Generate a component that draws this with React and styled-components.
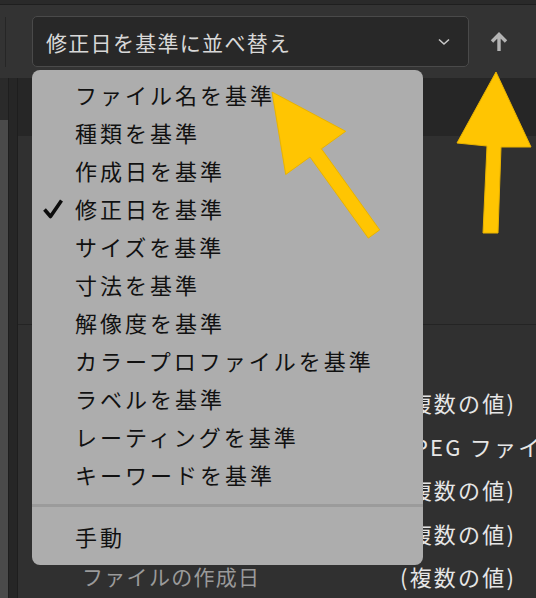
import React from 'react';
import styled, { createGlobalStyle } from 'styled-components';

const GlobalStyle = createGlobalStyle`
  html, body {
    margin: 0;
    padding: 0;
    background: #2f2f2f;
  }
  * {
    box-sizing: border-box;
  }
`;

const Window = styled.div`
  position: relative;
  width: 536px;
  height: 598px;
  overflow: hidden;
  background: #303030;
  font-family: 'Noto Sans CJK JP', 'Noto Sans', sans-serif;
`;

const TopStrip = styled.div`
  height: 5px;
  background: #2a2a2a;
  border-bottom: 1px solid #1f1f1f;
`;

const Toolbar = styled.div`
  height: 73px;
  display: flex;
  align-items: center;
  padding-left: 5px;
  background: #333333;
`;

const Divider = styled.div`
  width: 1px;
  height: 50px;
  background: #262626;
`;

const SelectWrap = styled.div`
  position: relative;
  margin-left: 26px;
  z-index: 5;
`;

const SelectBox = styled.div`
  width: 437px;
  height: 51px;
  display: flex;
  align-items: center;
  justify-content: space-between;
  padding: 0 18px 0 13px;
  background: #282828;
  border: 1.5px solid #4a4a4a;
  border-radius: 5px;
  color: #d8d8d8;
  font-size: 21px;
  letter-spacing: 1.3px;
`;

const SortButton = styled.div`
  margin-left: 20px;
  width: 20px;
  height: 22px;
  display: flex;
  align-items: center;
  justify-content: center;
`;

const Menu = styled.ul`
  position: absolute;
  top: 54px;
  left: 0;
  width: 391px;
  margin: 0;
  padding: 5px 0 10px;
  list-style: none;
  background: #adadad;
  border-radius: 8px;
`;

const MenuItem = styled.li`
  height: 38px;
  display: flex;
  align-items: center;
  padding-left: 43px;
  position: relative;
  color: #111111;
  font-size: 22px;
  letter-spacing: 3px;
  white-space: nowrap;
`;

const Check = styled.svg`
  position: absolute;
  left: 10px;
  top: 9px;
`;

const Separator = styled.li`
  height: 3px;
  margin: 11px 0 10px;
  background: #9b9b9b;
`;

const Body = styled.div`
  display: flex;
  height: 520px;
`;

const EdgeRail = styled.div`
  width: 8px;
  display: flex;
  flex-direction: column;
  background: #4a4a4a;
  &::before {
    content: '';
    height: 42px;
    background: #2a2a2a;
  }
`;

const Gutter = styled.div`
  width: 10px;
  background: #262626;
  border-left: 1px solid #1e1e1e;
  border-right: 1px solid #1e1e1e;
`;

const Panel = styled.div`
  flex: 1;
  display: flex;
  flex-direction: column;
  min-width: 0;
`;

const PanelHeader = styled.div`
  height: 59px;
  background: #262626;
`;

const Preview = styled.div`
  height: 191px;
  background: #303030;
  border-bottom: 1px solid #242424;
`;

const SectionGap = styled.div`
  height: 56px;
`;

const PropRow = styled.div`
  height: 44px;
  display: flex;
  align-items: center;
  white-space: nowrap;
`;

const PropLabel = styled.span`
  width: 382px;
  flex-shrink: 0;
  padding-left: 64px;
  color: #9a9a9a;
  font-size: 21px;
  letter-spacing: 1.3px;
`;

const PropValue = styled.span`
  color: #e6e6e6;
  font-size: 22px;
  letter-spacing: 2.2px;
`;

const Overlay = styled.svg`
  position: absolute;
  inset: 0;
  z-index: 10;
  pointer-events: none;
`;

const sortOptions = [
  'ファイル名を基準',
  '種類を基準',
  '作成日を基準',
  '修正日を基準',
  'サイズを基準',
  '寸法を基準',
  '解像度を基準',
  'カラープロファイルを基準',
  'ラベルを基準',
  'レーティングを基準',
  'キーワードを基準',
];

const properties = [
  ['ファイル名', '(複数の値)'],
  ['ドキュメントの種類', 'JPEG ファイル'],
  ['アプリケーション', '(複数の値)'],
  ['ファイルの変更日', '(複数の値)'],
  ['ファイルの作成日', '(複数の値)'],
];

const App = () => (
  <Window>
    <GlobalStyle />
    <TopStrip />
    <Toolbar>
      <Divider />
      <SelectWrap>
        <SelectBox>
          <span>修正日を基準に並べ替え</span>
          <svg width="12" height="8" viewBox="0 0 12 8">
            <path d="M1 1.5 L6 6 L11 1.5" fill="none" stroke="#c8c8c8" strokeWidth="1.6" />
          </svg>
        </SelectBox>
        <Menu>
          {sortOptions.map((label) => (
            <MenuItem key={label}>
              {label === '修正日を基準' && (
                <Check width="22" height="22" viewBox="0 0 22 22">
                  <path d="M2.5 11.5 L8.5 18.5 L19.5 2.5" fill="none" stroke="#0d0d0d" strokeWidth="3.6" strokeLinejoin="round" />
                </Check>
              )}
              {label}
            </MenuItem>
          ))}
          <Separator />
          <MenuItem>手動</MenuItem>
        </Menu>
      </SelectWrap>
      <SortButton>
        <svg width="18" height="20" viewBox="0 0 18 20">
          <path d="M9 19 V3 M2 9.5 L9 2.5 L16 9.5" fill="none" stroke="#b4b4b4" strokeWidth="3.4" />
        </svg>
      </SortButton>
    </Toolbar>
    <Body>
      <EdgeRail />
      <Gutter />
      <Panel>
        <PanelHeader />
        <Preview />
        <SectionGap />
        {properties.map(([label, value]) => (
          <PropRow key={label}>
            <PropLabel>{label}</PropLabel>
            <PropValue>{value}</PropValue>
          </PropRow>
        ))}
      </Panel>
    </Body>
    <Overlay width="536" height="598" viewBox="0 0 536 598">
      <polygon
        points="272,92 345.7,131.3 321.4,148.8 379.7,229.9 368.3,238.1 310,157 285.7,174.5"
        fill="#ffc502"
        stroke="#e9b300"
        strokeWidth="1"
      />
      <polygon
        points="496,72 531,147 501,147 498,233 483,233 487,146 457,143"
        fill="#ffc502"
        stroke="#e9b300"
        strokeWidth="1"
      />
    </Overlay>
  </Window>
);

export default App;
